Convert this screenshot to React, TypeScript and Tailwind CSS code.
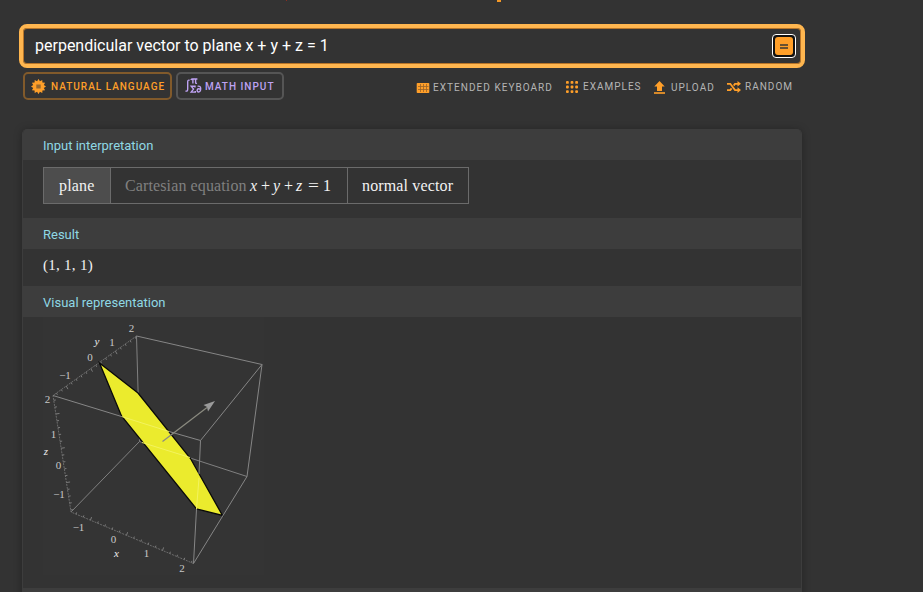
import type { ReactNode } from "react";

type Point = [number, number];

const lerp = (a: Point, b: Point, t: number): Point => [a[0] + (b[0] - a[0]) * t, a[1] + (b[1] - a[1]) * t];

function Ticks({ from, to, dx, dy, count }: { from: Point; to: Point; dx: number; dy: number; count: number }) {
  return (
    <g stroke="#7c7c7c" strokeWidth="1">
      {Array.from({ length: count }, (_, i) => {
        const [x, y] = lerp(from, to, (i + 0.7) / count);
        const k = i % 5 === 2 ? 1.4 : 0.8;
        return <line key={i} x1={x} y1={y} x2={x + dx * k} y2={y + dy * k} />;
      })}
    </g>
  );
}

const labels: { x: number; y: number; t: string; italic?: boolean }[] = [
  { x: 131.5, y: 332, t: "2" },
  { x: 97, y: 345, t: "y", italic: true },
  { x: 112, y: 346, t: "1" },
  { x: 90, y: 361, t: "0" },
  { x: 65, y: 379, t: "−1" },
  { x: 47.5, y: 403, t: "2" },
  { x: 53.5, y: 438, t: "1" },
  { x: 46, y: 454.5, t: "z", italic: true },
  { x: 58.5, y: 469, t: "0" },
  { x: 59, y: 497.5, t: "−1" },
  { x: 78.5, y: 530.5, t: "−1" },
  { x: 113.5, y: 543, t: "0" },
  { x: 116.5, y: 557, t: "x", italic: true },
  { x: 146.5, y: 557, t: "1" },
  { x: 182, y: 572, t: "2" },
];

function Plot() {
  return (
    <svg width="221" height="258" viewBox="43 317 221 258" className="block bg-[#343434]">
      <g fill="none" stroke="#808080" strokeWidth="1">
        <path d="M136.5 336L139.5 441.5L247 476.5M139.5 441.5L71 512" />
      </g>
      <g stroke="#6c6c6c" strokeWidth="1" strokeDasharray="2 1">
        <path d="M136.5 336L53 395.5L71 512L193.5 563.5" fill="none" />
      </g>
      <Ticks from={[53, 395.5]} to={[136.5, 336]} dx={1.2} dy={2.2} count={17} />
      <Ticks from={[53, 395.5]} to={[71, 512]} dx={2.6} dy={-0.4} count={17} />
      <Ticks from={[71, 512]} to={[193.5, 563.5]} dx={0.8} dy={-2.2} count={17} />
      <path d="M99.5 363L138 393L190.5 458.5L222.5 515.5L196.5 509L121.5 416Z" fill="#ebeb2d" stroke="#090909" strokeWidth="1.3" />
      <path d="M121.5 416.5L169 431.5M142 442.5L190 457.5M199 478L196.5 509" stroke="#f3f35e" strokeWidth="1" />
      <path d="M136.5 336L262 364.5L247 476.5L193.5 563.5L196.5 509M262 364.5L200.5 440.5L199 474M53 395.5L121.5 416.5M169 431.5L200.5 440.5" fill="none" stroke="#868686" strokeWidth="1" />
      <path d="M162.5 441.5L207 407.5" stroke="#8b8b80" strokeWidth="1.2" />
      <path d="M215 401L203.5 405L207 407L208 411.5Z" fill="#9a9a9a" />
      <g fontFamily="'Liberation Serif', serif" fontSize="11" textAnchor="middle">
        {labels.map((l, i) => (
          <text key={i} x={l.x} y={l.y} fontStyle={l.italic ? "italic" : "normal"} fill={l.italic ? "#eeeeee" : "#c8c8c8"}>
            {l.t}
          </text>
        ))}
      </g>
    </svg>
  );
}

function SpikeyIcon() {
  const pts = Array.from({ length: 24 }, (_, i) => {
    const r = i % 2 ? 5.5 : 7.6;
    const a = (i * Math.PI) / 12;
    return `${(7.5 + r * Math.sin(a)).toFixed(2)},${(7.5 - r * Math.cos(a)).toFixed(2)}`;
  }).join(" ");
  return (
    <svg width="15" height="15" viewBox="0 0 15 15">
      <polygon points={pts} fill="#ff9f29" />
      <path d="M5.3 5.5h4.4v4H5.3z" fill="#99692f" />
    </svg>
  );
}

function MathIcon() {
  return (
    <svg width="17" height="16" viewBox="0 0 17 16" className="shrink-0" fill="none" stroke="#bea2f3" strokeWidth="1.4">
      <path d="M4.6 2.4C3.2 1.7 2.7 2.5 2.7 4v7c0 1.9-.7 2.5-2.2 1.8" />
      <path d="M5.8 2c.5-.8 1-1 1.7-1H12.4M7.9 1v4.6M10.6 1v3.7c0 .7.6.8 1.3.4" />
      <path d="M10 9.4V8.2H6.2l2.3 2.9-2.3 3h4.1v-1.2" />
      <path d="M12.6 8.3c1.9-.6 3.1.3 3.1 2.3 0 2.2-.8 3.4-2.1 3.4-2.1 0-1.8-3.2 0-3.2.9 0 1.6.4 2 .8" />
    </svg>
  );
}

function KeyboardIcon() {
  return (
    <svg width="14" height="10" viewBox="0 0 14 10" className="shrink-0">
      <path d="M1.5 0h11a.8.8 0 0 1 .8.8v8.4a.8.8 0 0 1-.8.8h-11a.8.8 0 0 1-.8-.8V.8A.8.8 0 0 1 1.5 0z" fill="#ff9f29" />
      <path d="M2 3.5h10.5M2 6.5h10.5M4.5 1v8M7.5 1v8M10.5 1v8" stroke="#99642a" strokeWidth=".8" />
    </svg>
  );
}

function GridIcon() {
  return (
    <svg width="12" height="12" viewBox="0 0 12 12" fill="#ff9f29">
      {[0, 1, 2].flatMap((r) => [0, 1, 2].map((c) => <rect key={`${r}${c}`} x={c * 4.6} y={r * 4.6} width="2.8" height="2.8" rx="0.9" />))}
    </svg>
  );
}

function UploadIcon() {
  return (
    <svg width="11" height="13" viewBox="0 0 11 13" fill="#ff9f29">
      <path d="M5.5 0L10.7 5.6H8V10H3V5.6H.3z" />
      <path d="M0 11.2h11v1.6H0z" />
    </svg>
  );
}

function ShuffleIcon() {
  return (
    <svg width="14" height="12" viewBox="0 0 14 12" fill="#ff9f29">
      <path d="M0 2.8h3.3L8 9.1h3M0 9.1h3.3l1.3-1.7M6.7 4.6L8 2.8h3" fill="none" stroke="#ff9f29" strokeWidth="1.8" />
      <path d="M10.5 0L14 2.8l-3.5 2.8zM10.5 6.3L14 9.1l-3.5 2.8z" />
    </svg>
  );
}

function PodTitle({ children }: { children: ReactNode }) {
  return <h2 className="flex h-[31px] items-center bg-[#3d3d3d] pl-5 pt-[2px] text-[13px] leading-4 text-[#8fd8e4]">{children}</h2>;
}

function Tool({ icon, label, className }: { icon: ReactNode; label: string; className: string }) {
  return (
    <a className={`flex items-center text-[10px] leading-3 text-[#b5b5b5] ${className}`}>
      {icon}
      <span className="whitespace-nowrap">{label}</span>
    </a>
  );
}

export default function App() {
  return (
    <div className="h-[592px] w-[923px] overflow-hidden bg-[#333] font-['Roboto',sans-serif]">
      <div className="flex h-6 items-start">
        <span className="ml-[286px] h-px w-px bg-[#8c2c20]" />
        <span className="ml-[210px] h-[2px] w-1 bg-[#f39827]" />
      </div>
      <div className="ml-[19px] flex h-[44px] w-[786px] items-center justify-between rounded-lg border-4 border-[#ffb64f] pl-3 pr-[5px] shadow-[inset_0_0_0_1px_#b87529]">
        <span className="text-[16px] leading-5 text-white">perpendicular vector to plane x + y + z = 1</span>
        <button className="flex h-6 w-6 items-center justify-center rounded-[4px] border border-white bg-[#111]">
          <span className="flex h-[18px] w-[18px] flex-col items-center justify-center gap-px rounded-[3px] bg-[#ff9f29]">
            <span className="h-[2px] w-2 bg-[#6a5130]" />
            <span className="h-[2px] w-2 bg-[#6a5130]" />
          </span>
        </button>
      </div>
      <div className="flex h-[61px] items-start pl-[23px] pt-1">
        <button className="flex h-7 w-[149px] items-center rounded-[5px] border-2 border-[#815a2b] pl-[6px] text-[10px] font-medium text-[#ff9f29]">
          <SpikeyIcon />
          <span className="ml-[5px] whitespace-nowrap tracking-[1px]">NATURAL LANGUAGE</span>
        </button>
        <button className="ml-1 flex h-7 w-[108px] items-center rounded-[5px] border-2 border-[#555] pl-[7px] text-[10px] font-medium text-[#bea2f3]">
          <MathIcon />
          <span className="ml-[3px] whitespace-nowrap tracking-[1px]">MATH INPUT</span>
        </button>
        <div className="ml-[132px] flex items-start pt-2">
          <Tool icon={<KeyboardIcon />} label="EXTENDED KEYBOARD" className="w-[150px] gap-[3px] pt-[2px] tracking-[1.04px]" />
          <Tool icon={<GridIcon />} label="EXAMPLES" className="w-[88px] gap-[5px] pt-px tracking-[1px]" />
          <Tool icon={<UploadIcon />} label="UPLOAD" className="w-[73px] gap-[6px] pt-px tracking-[1px]" />
          <Tool icon={<ShuffleIcon />} label="RANDOM" className="gap-1 pt-px tracking-[1px]" />
        </div>
      </div>
      <main className="ml-[22px] h-[490px] w-[780px] overflow-hidden rounded-t-[5px] border-x border-[#3d3d3d] bg-[#333] shadow-[0_1px_8px_rgba(0,0,0,0.3)]">
        <section className="h-[89px]">
          <PodTitle>Input interpretation</PodTitle>
          <div className="ml-5 mt-[7px] flex h-[37px] w-[426px] border border-[#6b6b6b] font-['Liberation_Serif',serif] text-[16px] leading-9 text-[#f2f2f2]">
            <span className="w-[67px] border-r border-[#6b6b6b] bg-[#4d4d4d] pl-[15px] tracking-[0.15px]">plane</span>
            <span className="flex w-[237px] whitespace-pre border-r border-[#6b6b6b] pl-[14px]">
              <span className="w-[125px] text-[#808080] tracking-[0.12px]">Cartesian equation </span>
              <span className="flex"><i className="w-[11px]">x</i><span className="w-3">+</span><i className="w-[11px]">y</i><span className="w-3">+</span><i className="w-3">z</i><span className="w-[15px] origin-left scale-x-120">=</span><span>1</span></span>
            </span>
            <span className="whitespace-nowrap pl-[14px] tracking-[0.15px]">normal vector</span>
          </div>
        </section>
        <section className="h-[68px]">
          <PodTitle>Result</PodTitle>
          <p className="pl-5 pt-[6px] font-['Liberation_Serif',serif] text-[15px] leading-5 tracking-[0.27px] text-[#f2f2f2]">(1, 1, 1)</p>
        </section>
        <section className="h-[302px]">
          <PodTitle>Visual representation</PodTitle>
          <div className="pl-5">
            <Plot />
          </div>
        </section>
        <div className="h-8 bg-[#3d3d3d]" />
      </main>
    </div>
  );
}
